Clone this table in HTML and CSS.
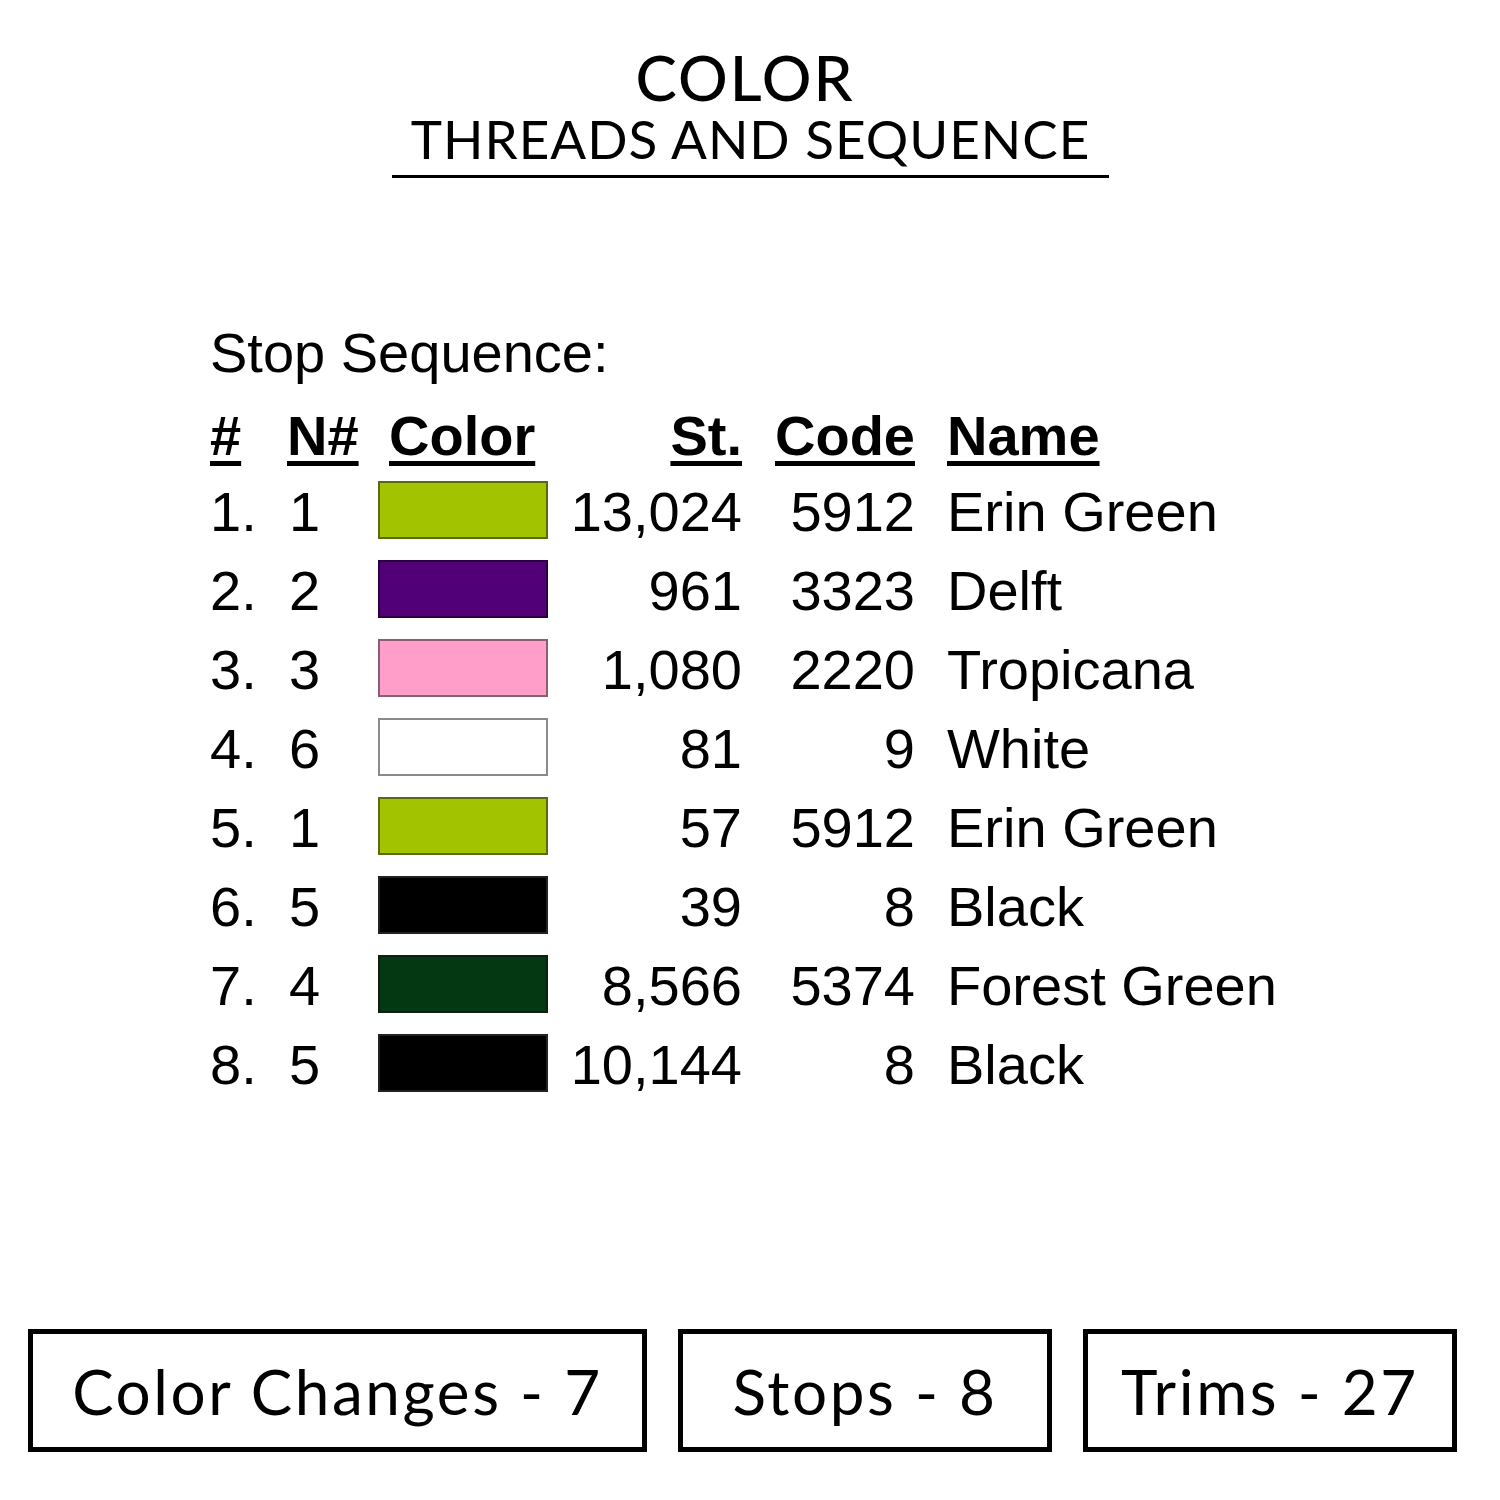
FILE: index.html
```html
<!DOCTYPE html>
<html>
<head>
<meta charset="utf-8">
<link rel="stylesheet" href="styles.css">
</head>
<body>
<div class="page">
  <header class="header">
    <div class="title">COLOR</div>
    <div class="subtitle">THREADS AND SEQUENCE</div>
  </header>

  <section class="seq">
    <div class="seq-title">Stop Sequence:</div>
    <div class="grid">
      <div class="h c1">#</div>
      <div class="h c2">N#</div>
      <div class="h c3">Color</div>
      <div class="h c4">St.</div>
      <div class="h c5">Code</div>
      <div class="h c6">Name</div>

      <div class="r c1">1.</div><div class="r c2">1</div><div class="r c3"><span class="sw sw-erin"></span></div><div class="r c4">13,024</div><div class="r c5">5912</div><div class="r c6">Erin Green</div>
      <div class="r c1">2.</div><div class="r c2">2</div><div class="r c3"><span class="sw sw-delft"></span></div><div class="r c4">961</div><div class="r c5">3323</div><div class="r c6">Delft</div>
      <div class="r c1">3.</div><div class="r c2">3</div><div class="r c3"><span class="sw sw-trop"></span></div><div class="r c4">1,080</div><div class="r c5">2220</div><div class="r c6">Tropicana</div>
      <div class="r c1">4.</div><div class="r c2">6</div><div class="r c3"><span class="sw sw-white"></span></div><div class="r c4">81</div><div class="r c5">9</div><div class="r c6">White</div>
      <div class="r c1">5.</div><div class="r c2">1</div><div class="r c3"><span class="sw sw-erin"></span></div><div class="r c4">57</div><div class="r c5">5912</div><div class="r c6">Erin Green</div>
      <div class="r c1">6.</div><div class="r c2">5</div><div class="r c3"><span class="sw sw-black"></span></div><div class="r c4">39</div><div class="r c5">8</div><div class="r c6">Black</div>
      <div class="r c1">7.</div><div class="r c2">4</div><div class="r c3"><span class="sw sw-forest"></span></div><div class="r c4">8,566</div><div class="r c5">5374</div><div class="r c6">Forest Green</div>
      <div class="r c1">8.</div><div class="r c2">5</div><div class="r c3"><span class="sw sw-black"></span></div><div class="r c4">10,144</div><div class="r c5">8</div><div class="r c6">Black</div>
    </div>
  </section>

  <footer class="stats">
    <div class="stat stat-wide">Color Changes - 7</div>
    <div class="stat">Stops - 8</div>
    <div class="stat">Trims - 27</div>
  </footer>
</div>
</body>
</html>
```

FILE: styles.css
```css
html, body {
  margin: 0;
  padding: 0;
  background: #ffffff;
}

.page {
  width: 1500px;
  height: 1500px;
  display: flex;
  flex-direction: column;
  color: #000;
}

.header {
  display: flex;
  flex-direction: column;
  align-items: center;
  padding-top: 47px;
  font-family: "Lato", "Open Sans", sans-serif;
}

.title {
  font-size: 62px;
  font-weight: 500;
  line-height: 60px;
  letter-spacing: 2px;
  margin-left: -10px;
}

.subtitle {
  font-size: 53px;
  font-weight: 400;
  line-height: 56px;
  letter-spacing: 1px;
  margin-top: 4px;
  padding: 0 19px 8px;
  border-bottom: 3px solid #000;
  margin-left: 1px;
}

.seq {
  padding-left: 210px;
  margin-top: 135px;
  font-family: "Liberation Sans", Arial, sans-serif;
  font-size: 56px;
}

.seq-title {
  line-height: 79px;
  margin-bottom: 8px;
}

.grid {
  display: grid;
  grid-template-columns: 77px 91px 170px 194px 173px auto;
  align-items: center;
}

.h {
  font-weight: 700;
  line-height: 72px;
  text-decoration: underline;
  text-decoration-thickness: 5px;
  text-underline-offset: 6px;
}

.r {
  line-height: 79px;
}

.r.c2 { padding-left: 2px; }
.h.c2 { padding-left: 0; }
.h.c3 { padding-left: 11px; }
.c4, .c5 { text-align: right; }
.c5.h { padding-right: 0; }
.c6 { padding-left: 32px; }

.c3.r {
  display: flex;
  align-items: center;
}

.sw {
  display: block;
  width: 170px;
  height: 58px;
  margin-top: -4px;
  box-sizing: border-box;
  border: 2px solid #555;
}

.sw-erin { background: #a2c300; border-color: #5a6a10; }
.sw-delft { background: #520078; border-color: #2a0040; }
.sw-trop { background: #ff9ec9; border-color: #8a6070; }
.sw-white { background: #ffffff; border-color: #8a8a8a; }
.sw-black { background: #000000; border-color: #222; }
.sw-forest { background: #033813; border-color: #102010; }

.stats {
  margin-top: auto;
  margin-bottom: 48px;
  display: flex;
  gap: 31px;
  padding-left: 28px;
  font-family: "Lato", "Open Sans", sans-serif;
}

.stat {
  box-sizing: border-box;
  width: 374px;
  height: 123px;
  border: 5px solid #000;
  display: flex;
  align-items: center;
  justify-content: center;
  font-size: 62px;
  font-weight: 400;
  letter-spacing: 2.6px;
}

.stat-wide {
  width: 619px;
}
```
